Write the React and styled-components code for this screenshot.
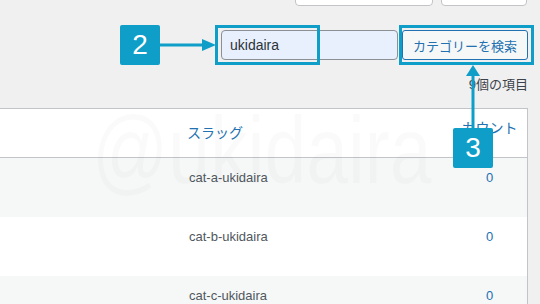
import styled, { createGlobalStyle } from "styled-components";

const ACCENT = "#0e9ec8";

const GlobalStyle = createGlobalStyle`
  html, body {
    margin: 0;
    padding: 0;
    background: #f0f0f1;
  }
  body {
    font-family: "Liberation Sans", "Noto Sans CJK JP", sans-serif;
    color: #3c434a;
  }
`;

const rows = [
  { slug: "cat-a-ukidaira", count: 0 },
  { slug: "cat-b-ukidaira", count: 0 },
  { slug: "cat-c-ukidaira", count: 0 },
];

export default function App() {
  return (
    <Page>
      <GlobalStyle />
      <TopBar>
        <GhostButton $width={138} />
        <GhostButton $width={86} />
      </TopBar>

      <SearchRow>
        <SearchInput defaultValue="ukidaira" readOnly />
        <SearchButton>カテゴリーを検索</SearchButton>
      </SearchRow>

      <ItemCount>9個の項目</ItemCount>

      <Table>
        <HeaderRow>
          <HeadCell />
          <HeadCell $pad={13}>
            <HeadLink>スラッグ</HeadLink>
          </HeadCell>
          <HeadCell $pad={8} $center>
            <HeadLink>カウント</HeadLink>
          </HeadCell>
        </HeaderRow>
        {rows.map((r, i) => (
          <Row key={r.slug} $alt={i % 2 === 0}>
            <Cell />
            <Cell>{r.slug}</Cell>
            <Cell $center>
              <CountLink>{r.count}</CountLink>
            </Cell>
          </Row>
        ))}
      </Table>

      <Watermark>@ukidaira</Watermark>

      {/* annotations */}
      <Badge $left={120} $top={25}>2</Badge>
      <ArrowSvg $left={160} $top={38} width="56" height="14" viewBox="0 0 56 14">
        <line x1="0" y1="7" x2="44" y2="7" stroke={ACCENT} strokeWidth="3" />
        <polygon points="42,1 56,7 42,13" fill={ACCENT} />
      </ArrowSvg>
      <Highlight $left={215} $top={25} $width={105} $height={40} />

      <Highlight $left={399} $top={25} $width={135} $height={40} />
      <ArrowSvg $left={466} $top={65} width="14" height="64" viewBox="0 0 14 64">
        <polygon points="7,0 0,11 14,11" fill={ACCENT} />
        <line x1="7" y1="10" x2="7" y2="64" stroke={ACCENT} strokeWidth="3" />
      </ArrowSvg>
      <Badge $left={453} $top={128}>3</Badge>
    </Page>
  );
}

const Page = styled.div`
  position: relative;
  width: 540px;
  height: 304px;
  overflow: hidden;
  background: #f0f0f1;
`;

const TopBar = styled.div`
  height: 6px;
  overflow: hidden;
  display: flex;
  justify-content: flex-end;
  align-items: flex-end;
  gap: 8px;
  padding-right: 13px;
`;

const GhostButton = styled.div`
  width: ${(p) => p.$width}px;
  height: 30px;
  flex: none;
  box-sizing: border-box;
  background: #fff;
  border: 1px solid #c3c4c7;
  border-radius: 4px;
`;

const SearchRow = styled.div`
  margin-top: 24px;
  height: 30px;
  display: flex;
  justify-content: flex-end;
  gap: 4px;
  padding-right: 12px;
`;

const SearchInput = styled.input`
  width: 177px;
  height: 30px;
  box-sizing: border-box;
  margin: 0;
  padding: 0 8px;
  background: #e8f0fe;
  border: 1px solid #8c8f94;
  border-radius: 4px;
  font-family: "Liberation Sans", "Noto Sans CJK JP", sans-serif;
  font-size: 14px;
  color: #2c3338;
  outline: none;
`;

const SearchButton = styled.button`
  width: 126px;
  height: 30px;
  box-sizing: border-box;
  margin: 0;
  padding: 0;
  background: #f6f7f7;
  border: 1px solid #2271b1;
  border-radius: 3px;
  color: #2271b1;
  font-family: "Noto Sans CJK JP", sans-serif;
  font-size: 13px;
`;

const ItemCount = styled.div`
  margin-top: 16px;
  height: 18px;
  line-height: 18px;
  padding-right: 12px;
  text-align: right;
  font-family: "Liberation Sans", "Noto Sans CJK JP", sans-serif;
  font-size: 13px;
  color: #3c434a;
`;

const Table = styled.div`
  margin-top: 14px;
  width: 528px;
  box-sizing: border-box;
  background: #fff;
  border: 1px solid #c3c4c7;
  border-left: none;
`;

const columns = "179px 1fr 75px";

const HeaderRow = styled.div`
  display: grid;
  grid-template-columns: ${columns};
  height: 48px;
  border-bottom: 1px solid #c3c4c7;
`;

const HeadCell = styled.div`
  padding: ${(p) => p.$pad || 0}px 8px 0;
  text-align: ${(p) => (p.$center ? "center" : "left")};
  font-family: "Noto Sans CJK JP", sans-serif;
  font-size: 14px;
  line-height: 20px;
`;

const HeadLink = styled.span`
  color: #2271b1;
`;

const Row = styled.div`
  display: grid;
  grid-template-columns: ${columns};
  height: 59px;
  background: ${(p) => (p.$alt ? "#f6f7f7" : "#fff")};
`;

const Cell = styled.div`
  padding: 10px 10px 0;
  line-height: 19px;
  font-size: 13px;
  color: #50575e;
  text-align: ${(p) => (p.$center ? "center" : "left")};
`;

const CountLink = styled.span`
  color: #2271b1;
`;

const Watermark = styled.div`
  position: absolute;
  left: 92px;
  top: 96px;
  font-family: "Liberation Sans", sans-serif;
  font-size: 94px;
  line-height: 110px;
  color: rgba(0, 0, 0, 0.018);
  transform: scaleX(0.8);
  transform-origin: left top;
  white-space: nowrap;
  pointer-events: none;
`;

const Badge = styled.div`
  position: absolute;
  left: ${(p) => p.$left}px;
  top: ${(p) => p.$top}px;
  width: 40px;
  height: 40px;
  border-radius: 2px;
  background: ${ACCENT};
  color: #fff;
  display: flex;
  align-items: center;
  justify-content: center;
  font-family: "Liberation Sans", sans-serif;
  font-size: 28px;
`;

const ArrowSvg = styled.svg`
  position: absolute;
  left: ${(p) => p.$left}px;
  top: ${(p) => p.$top}px;
  display: block;
`;

const Highlight = styled.div`
  position: absolute;
  left: ${(p) => p.$left}px;
  top: ${(p) => p.$top}px;
  width: ${(p) => p.$width}px;
  height: ${(p) => p.$height}px;
  box-sizing: border-box;
  border: 3px solid ${ACCENT};
  pointer-events: none;
`;
